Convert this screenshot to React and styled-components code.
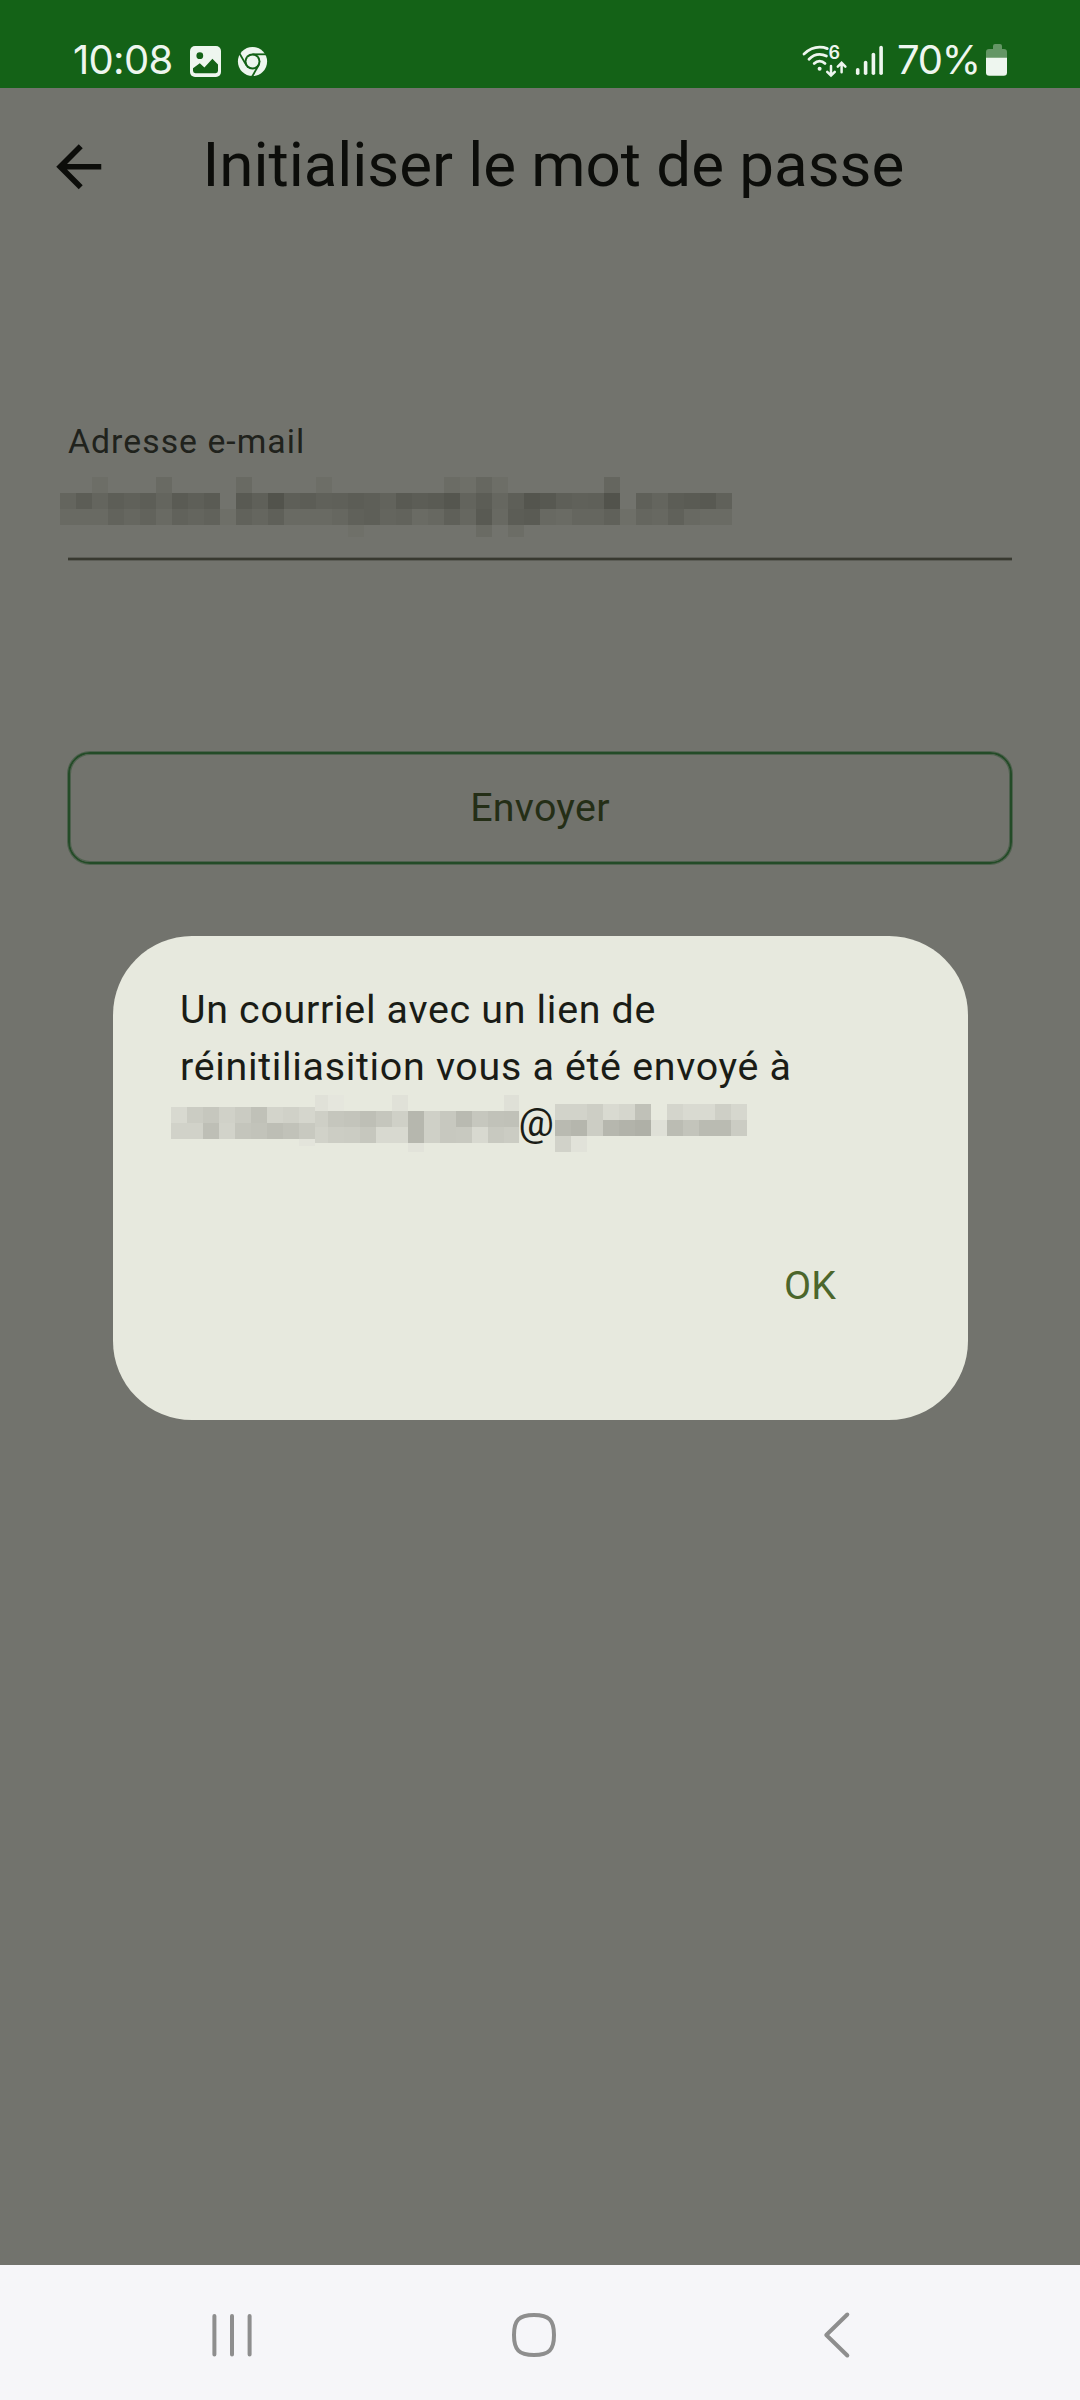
import React from "react";
import styled, { createGlobalStyle } from "styled-components";

const GlobalStyle = createGlobalStyle`
  body {
    margin: 0;
    background: #72736d;
    font-family: Roboto, "Liberation Sans", sans-serif;
  }
`;

const Screen = styled.div`
  position: relative;
  display: flex;
  flex-direction: column;
  width: 1080px;
  height: 2400px;
  overflow: hidden;
  background: #72736d;
`;

const StatusBar = styled.header`
  box-sizing: border-box;
  display: flex;
  justify-content: space-between;
  height: 88px;
  padding: 40px 70px 0 73px;
  background: #146217;
  color: #eef6ef;
`;

const StatusGroup = styled.div`
  display: flex;
  align-items: flex-start;
`;

const StatusText = styled.span`
  font-family: Inter, Roboto, sans-serif;
  font-size: 40px;
  font-weight: 400;
  line-height: 40px;
  letter-spacing: ${(p) => p.$spacing};
  width: ${(p) => p.$width}px;
  white-space: nowrap;
`;

const Glyph = styled.svg`
  display: block;
  flex: none;
  margin-left: ${(p) => p.$gap || 0}px;
`;

const Page = styled.main`
  flex: 1;
  display: flex;
  flex-direction: column;
`;

const TopBar = styled.div`
  display: flex;
  align-items: center;
  height: 158px;
  padding-left: 45px;
`;

const Title = styled.h1`
  margin: -4px 0 0 90px;
  font-size: 61.9px;
  line-height: 78px;
  font-weight: 400;
  letter-spacing: -0.04px;
  color: #0c0d0a;
  white-space: nowrap;
`;

const Form = styled.form`
  display: flex;
  flex-direction: column;
  padding: 173px 68px 0;
`;

const Label = styled.label`
  font-size: 33.75px;
  line-height: 45px;
  letter-spacing: 1.03px;
  color: #20221c;
`;

const Field = styled.div`
  box-sizing: border-box;
  height: 96px;
  padding-top: 13px;
  border-bottom: 2px solid #383930;
  box-shadow: 0 1px 0 #5c5d56, inset 0 -1px 0 #5c5d56;
`;

const SubmitButton = styled.button`
  height: 112px;
  margin-top: 192px;
  padding: 0;
  background: none;
  border: 2px solid #234b27;
  border-radius: 22px;
  box-shadow: 0 0 0 1px rgba(35, 75, 39, 0.45), inset 0 0 0 1px rgba(35, 75, 39, 0.45);
  font: 400 39.375px/56px Roboto, sans-serif;
  letter-spacing: 0.28px;
  color: #242e16;
`;

const ModalLayer = styled.div`
  position: absolute;
  inset: 88px 0 135px;
  display: flex;
  justify-content: center;
  align-items: flex-start;
  padding-top: 848px;
`;

const Dialog = styled.section`
  box-sizing: border-box;
  display: flex;
  flex-direction: column;
  width: 855px;
  height: 484px;
  padding: 45px 67px 0 67.5px;
  border-radius: 79px;
  background: #e7e9de;
  color: #1a1c16;
`;

const Message = styled.p`
  margin: 0;
  font-size: 39.375px;
  line-height: 57px;
  letter-spacing: 0.7px;
  white-space: nowrap;
`;

const AddressLine = styled.div`
  display: flex;
  align-items: flex-start;
  height: 57px;
  margin-left: -9px;
`;

const At = styled.span`
  width: 36px;
  font-size: 39.375px;
  line-height: 56px;
  text-indent: -0.5px;
`;

const Actions = styled.div`
  display: flex;
  justify-content: flex-end;
  padding: 106px 64.2px 0 0;
`;

const TextButton = styled.button`
  padding: 0;
  border: 0;
  background: none;
  font: 400 39.375px/56px Roboto, sans-serif;
  letter-spacing: 0.28px;
  color: #4c662b;
`;

const MosaicGrid = styled.div`
  display: grid;
  flex: none;
  grid-template-columns: ${(p) => p.$columns};
  grid-template-rows: ${(p) => p.$rows};
  justify-content: start;
  margin: ${(p) => p.$margin || "0"};
`;

const Tile = styled.i`
  background: ${(p) =>
    p.$tone === "--"
      ? "transparent"
      : `rgb(${parseInt(p.$tone, 16)}, ${parseInt(p.$tone, 16) + 1}, ${parseInt(p.$tone, 16) - p.$warmth})`};
`;

const NavBar = styled.nav`
  display: flex;
  align-items: center;
  box-sizing: border-box;
  height: 135px;
  padding: 4px 0 0 206px;
  background: #f6f6f9;
`;

function Mosaic({ data, columns, rows, margin, warmth = 8 }) {
  return (
    <MosaicGrid $columns={columns} $rows={rows} $margin={margin}>
      {data.flatMap((line, y) =>
        line.split(" ").map((tone, x) => <Tile key={`${y}-${x}`} $tone={tone} $warmth={warmth} />)
      )}
    </MosaicGrid>
  );
}

const fieldMosaic = [
  "-- -- 6d -- -- -- 69 -- -- -- -- 69 -- -- -- -- 6d -- -- -- -- -- -- -- 6b 6e 66 6d -- -- -- -- -- -- 65 -- -- -- -- -- -- --",
  "64 5c 64 5d 60 5d 64 5a 5e 5a -- 59 5f 52 5e 5c 60 5f 5c 5e 62 59 5c 5a 55 63 5c 66 5e 54 57 5e 60 5f 52 -- 5f 64 5c 5a 58 60",
  "69 69 69 62 66 62 69 61 64 61 6e 61 65 5f 69 69 69 66 60 5e 64 62 6a 67 5f 66 59 68 5c 5a 68 6a 65 65 60 6e 65 67 60 68 6a 6a",
  "-- -- -- -- -- -- -- -- -- -- -- -- -- -- -- -- -- -- 6f -- -- -- -- -- -- -- 6a -- 6c -- -- -- -- -- -- -- -- -- -- -- -- --",
];

const nameMosaic = [
  "d8 cb c6 d0 ca c0 d3 d0 d5",
  "d1 d1 be d2 c4 c2 bd c1 c8",
  "-- -- -- -- -- -- -- -- e3",
];

const surnameMosaic = [
  "e0 e5 -- -- -- e0 -- -- -- -- -- -- df",
  "ce c5 c3 be c5 cf b6 cf c7 b9 c6 c1 c0",
  "d1 cc cb c6 d8 d8 b6 cf c7 c8 d8 c8 cb",
  "-- -- -- -- -- -- e2 -- -- -- -- -- --",
];

const domainMosaic = [
  "d2 d2 cd d9 d5 c0 -- d4 d9 d9 ce d6",
  "b9 b5 cc b6 b2 af df bb c3 ba ba cb",
  "d1 e1 -- -- -- -- -- -- -- -- -- --",
];

const PictureIcon = () => (
  <Glyph $gap={15} width="31" height="38" viewBox="0 -6 31 38">
    <rect width="31" height="31" rx="5" fill="#eef6ef" />
    <circle cx="9.8" cy="9.7" r="3.4" fill="#146217" />
    <path d="M3 22.2 9.8 17.2l4.6 4.2 8-8.6 5.6 5.8v6.2q0 2.4-2.4 2.4H5.4Q3 27.2 3 24.8z" fill="#146217" />
  </Glyph>
);

const ChromeIcon = () => (
  <Glyph $gap={16} width="31" height="38" viewBox="-15.5 -21.5 31 38">
    <circle r="14.6" fill="#eef6ef" />
    <circle r="8" fill="#146217" />
    <circle r="6" fill="#eef6ef" />
    {[0, 120, 240].map((a) => (
      <path key={a} d="M0-7.2H14" transform={`rotate(${a})`} stroke="#146217" strokeWidth="1.8" />
    ))}
  </Glyph>
);

const WifiIcon = () => (
  <Glyph width="50" height="40" viewBox="0 0 50 40" fill="none" stroke="#eef6ef" strokeWidth="2.8" strokeLinecap="round">
    <path d="M4 14C9.5 8.9 14 7.2 19.6 7.2c2.8 0 5.4.5 7.7 1.4" />
    <path d="M9 19.2c3.3-3.4 6.6-4.9 10.6-4.9 2.5 0 4.7.6 6.8 1.7" />
    <path d="M14.2 23.6c1.6-1.6 3.3-2.4 5.4-2.4s3.8.8 5.4 2.4" />
    <circle cx="19.6" cy="28.7" r="2" fill="#eef6ef" stroke="none" />
    <text x="28.6" y="19.2" fontFamily="Inter" fontSize="18" fontWeight="600" fill="#eef6ef" stroke="none">6</text>
    <path d="M31 26v9M27.2 31.8l3.8 3.8 3.8-3.8M41.6 32.2v-9M37.8 26.6l3.8-3.8 3.8 3.8" strokeWidth="2.5" />
  </Glyph>
);

const SignalIcon = () => (
  <Glyph $gap={5} width="30" height="40" viewBox="0 0 30 40" fill="#eef6ef">
    <rect x="0.9" y="28" width="3.6" height="7" rx="1.8" />
    <rect x="8.8" y="20.8" width="3.6" height="14.2" rx="1.8" />
    <rect x="16.6" y="12.8" width="3.6" height="22.2" rx="1.8" />
    <rect x="24.3" y="5.8" width="3.6" height="29.2" rx="1.8" />
  </Glyph>
);

const BatteryIcon = () => (
  <Glyph $gap={5} width="24" height="40" viewBox="0 0 24 40">
    <path d="M7 9V6q0-2 2-2h5q2 0 2 2v3h2q3 0 3 3v6H0v-6q0-3 3-3z" fill="#649665" />
    <path d="M0 17.7h21v14.8q0 3.3-3.3 3.3H3.3Q0 35.8 0 32.5z" fill="#eef6ef" />
  </Glyph>
);

const BackArrow = () => (
  <Glyph width="67.5" height="67.5" viewBox="0 0 24 24" fill="#0c0d0a">
    <path d="M20 11H7.83l5.59-5.59L12 4l-8 8 8 8 1.41-1.41L7.83 13H20v-2z" />
  </Glyph>
);

export default function App() {
  return (
    <Screen>
      <GlobalStyle />
      <StatusBar>
        <StatusGroup>
          <StatusText $width={102} $spacing="-0.7px">10:08</StatusText>
          <PictureIcon />
          <ChromeIcon />
        </StatusGroup>
        <StatusGroup>
          <WifiIcon />
          <SignalIcon />
          <Glyph width="12" height="40" />
          <StatusText $width={84} $spacing="-1.3px">70%</StatusText>
          <BatteryIcon />
        </StatusGroup>
      </StatusBar>

      <Page>
        <TopBar>
          <BackArrow />
          <Title>Initialiser le mot de passe</Title>
        </TopBar>
        <Form>
          <Label>Adresse e-mail</Label>
          <Field>
            <Mosaic data={fieldMosaic} columns="repeat(42, 16px)" rows="16px 16px 16px 12px" margin="0 0 0 -8px" warmth={6} />
          </Field>
          <SubmitButton type="button">Envoyer</SubmitButton>
        </Form>
      </Page>

      <ModalLayer>
        <Dialog role="dialog">
          <Message>
            Un courriel avec un lien de
            <br />
            réinitiliasition vous a été envoyé à
          </Message>
          <AddressLine>
            <Mosaic data={nameMosaic} columns="repeat(9, 16px)" rows="16px 16px 7px" margin="12px 0 0" />
            <Mosaic data={surnameMosaic} columns="13px repeat(11, 16px) 15px" rows="16px 16px 16px 9px" />
            <At>@</At>
            <Mosaic data={domainMosaic} columns="repeat(12, 16px)" rows="16px 16px 16px" margin="9px 0 0" />
          </AddressLine>
          <Actions>
            <TextButton type="button">OK</TextButton>
          </Actions>
        </Dialog>
      </ModalLayer>

      <NavBar>
        <Glyph width="52" height="52" viewBox="206 2309 52 52" stroke="#8e8e8e" strokeWidth="4" strokeLinecap="round">
          <path d="M214.4 2316v38.4M232 2316v38.4M249.6 2316v38.4" />
        </Glyph>
        <Glyph $gap={250} width="52" height="52" viewBox="508 2309 52 52" fill="none" stroke="#8e8e8e" strokeWidth="4">
          <path d="M534 2315c15 0 20 5 20 20s-5 20-20 20-20-5-20-20 5-20 20-20z" />
        </Glyph>
        <Glyph $gap={263} width="32" height="52" viewBox="824 2309 32 52" fill="none" stroke="#8e8e8e" strokeWidth="4" strokeLinecap="round" strokeLinejoin="round">
          <path d="M848.3 2314.5 827.3 2335l21 20.5" />
        </Glyph>
      </NavBar>
    </Screen>
  );
}
